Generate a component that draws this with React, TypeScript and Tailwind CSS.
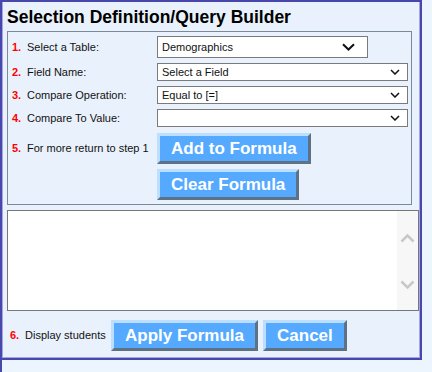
import React from "react";

const Chevron = ({ big }: { big?: boolean }) =>
    big ? (
        <svg width="13" height="8" viewBox="0 0 13 8" className="shrink-0">
            <path d="M1 1.2 L6.5 6.5 L12 1.2" fill="none" stroke="#111" strokeWidth="2" />
        </svg>
    ) : (
        <svg width="10" height="6" viewBox="0 0 10 6" className="shrink-0">
            <path d="M1 1 L5 5 L9 1" fill="none" stroke="#111" strokeWidth="1.5" />
        </svg>
    );

function Select({ value, big, width, height }: { value: string; big?: boolean; width: string; height: string }) {
    return (
        <div className={`${width} ${height} flex items-center justify-between bg-white border border-[#7a7a7a] pl-[4px] ${big ? "pr-[12px]" : "pr-[7px]"}`}>
            <span className="text-[11px] text-[#111] leading-none">{value}</span>
            <Chevron big={big} />
        </div>
    );
}

function BevelButton({ label }: { label: string }) {
    return (
        <button className="h-[31px] px-[11px] bg-[#55aaff] border-[3px] border-t-[#bcdeff] border-l-[#bcdeff] border-b-[#5e7285] border-r-[#5e7285] text-white font-bold text-[17px] leading-none whitespace-nowrap">
            {label}
        </button>
    );
}

function Step({ n, text, className }: { n: string; text: string; className?: string }) {
    return (
        <div className={`flex items-center text-[11px] text-[#111] ${className ?? ""}`}>
            <span className="w-[15px] text-[#ff0000] font-bold">{n}</span>
            <span>{text}</span>
        </div>
    );
}

export default function App() {
    const rows = [
        { n: "1.", text: "Select a Table:", value: "Demographics", big: true },
        { n: "2.", text: "Field Name:", value: "Select a Field" },
        { n: "3.", text: "Compare Operation:", value: "Equal to [=]" },
        { n: "4.", text: "Compare To Value:", value: "" },
    ];

    return (
        <div
            className="w-[432px] h-[372px] bg-[#ecf4fd] border-l-2 border-[#4848ac]"
            style={{ fontFamily: '"Liberation Sans", Arial, sans-serif' }}
        >
            <div className="w-[420px] h-[360px] bg-[#e9f2fc] border-t-2 border-r-2 border-b-2 border-[#4848ac] shadow-[inset_1px_0_0_#a4a4e6,inset_-1px_-1px_0_#a4a4e6] flex flex-col">
                {/* title */}
                <div className="h-[29px] pl-[5px] flex items-center">
                    <h1 className="text-[17.5px] font-bold text-black leading-none mt-[2px]">
                        Selection Definition/Query Builder
                    </h1>
                </div>

                {/* query box */}
                <div className="ml-[5px] w-[405px] h-[174px] border border-[#7b8a99] flex flex-col pl-[4px] pt-[4px]">
                    {rows.map((r, i) => (
                        <div key={r.n} className={`flex items-center ${i > 0 ? "mt-[5px]" : ""}`}>
                            <Step n={r.n} text={r.text} className="w-[145px]" />
                            <Select
                                value={r.value}
                                big={r.big}
                                width={r.big ? "w-[211px]" : "w-[251px]"}
                                height={r.big ? "h-[22px]" : "h-[18px]"}
                            />
                        </div>
                    ))}
                    <div className="flex items-center mt-[6px]">
                        <Step n="5." text="For more return to step 1" className="w-[145px]" />
                        <BevelButton label="Add to Formula" />
                    </div>
                    <div className="flex mt-[5px] pl-[145px]">
                        <BevelButton label="Clear Formula" />
                    </div>
                </div>

                {/* formula text area */}
                <div className="mt-[5px] ml-[5px] w-[412px] h-[101px] border border-[#777777] bg-white flex">
                    <div className="flex-1" />
                    <div className="w-[21px] bg-[#f7f7f7] flex flex-col items-center justify-between pt-[22px] pb-[20px]">
                        <svg width="15" height="10" viewBox="0 0 15 10">
                            <path d="M1.5 8.5 L7.5 2.5 L13.5 8.5" fill="none" stroke="#c8c8c8" strokeWidth="2.5" />
                        </svg>
                        <svg width="15" height="10" viewBox="0 0 15 10">
                            <path d="M1.5 1.5 L7.5 7.5 L13.5 1.5" fill="none" stroke="#c8c8c8" strokeWidth="2.5" />
                        </svg>
                    </div>
                </div>

                {/* apply row */}
                <div className="flex items-center mt-[9px] ml-[8px]">
                    <Step n="6." text="Display students" className="w-[101px]" />
                    <BevelButton label="Apply Formula" />
                    <div className="w-[5px]" />
                    <BevelButton label="Cancel" />
                </div>
            </div>
        </div>
    );
}
